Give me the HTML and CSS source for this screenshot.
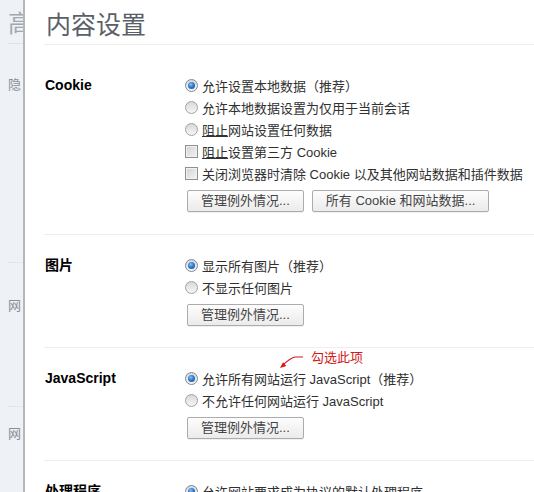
FILE: index.html
```html
<!DOCTYPE html>
<html lang="zh-CN">
<head>
<meta charset="utf-8">
<title>内容设置</title>
<link rel="stylesheet" href="styles.css">
</head>
<body>
<div class="page">
  <div class="strip">
    <div class="bg-title">高</div>
    <div class="bg-item bg-1">隐</div>
    <div class="bg-line bg-l1"></div>
    <div class="bg-item bg-2">网</div>
    <div class="bg-line bg-l2"></div>
    <div class="bg-item bg-3">网</div>
  </div>
  <div class="dialog">
    <div class="header"><h1 class="title">内容设置</h1></div>

    <section class="section first">
      <div class="label">Cookie</div>
      <div class="options">
        <div class="row"><span class="radio checked"></span><span>允许设置本地数据（推荐）</span></div>
        <div class="row"><span class="radio"></span><span>允许本地数据设置为仅用于当前会话</span></div>
        <div class="row"><span class="radio"></span><span><span class="ul">阻止</span>网站设置任何数据</span></div>
        <div class="row"><span class="check"></span><span><span class="ul">阻止</span>设置第三方 Cookie</span></div>
        <div class="row"><span class="check"></span><span>关闭浏览器时清除 Cookie 以及其他网站数据和插件数据</span></div>
        <div class="buttons">
          <button class="btn">管理例外情况...</button>
          <button class="btn">所有 Cookie 和网站数据...</button>
        </div>
      </div>
    </section>

    <section class="section">
      <div class="label">图片</div>
      <div class="options">
        <div class="row"><span class="radio checked"></span><span>显示所有图片（推荐）</span></div>
        <div class="row"><span class="radio"></span><span>不显示任何图片</span></div>
        <div class="buttons"><button class="btn">管理例外情况...</button></div>
      </div>
    </section>

    <section class="section">
      <div class="label">JavaScript</div>
      <div class="options">
        <div class="row"><span class="radio checked"></span><span>允许所有网站运行 JavaScript（推荐）</span></div>
        <div class="row"><span class="radio"></span><span>不允许任何网站运行 JavaScript</span></div>
        <div class="buttons"><button class="btn">管理例外情况...</button></div>
      </div>
    </section>

    <section class="section">
      <div class="label">处理程序</div>
      <div class="options">
        <div class="row"><span class="radio checked"></span><span>允许网站要求成为协议的默认处理程序</span></div>
      </div>
    </section>
  </div>

  <svg class="arrow" width="32" height="24" viewBox="0 0 32 24">
    <path d="M27 7 L19 7 Q14 8 6 16" fill="none" stroke="#d41818" stroke-width="1.2"/>
    <polygon points="4,18 10.3,16.1 7.1,12.3" fill="#d41818"/>
  </svg>
  <div class="note">勾选此项</div>
</div>
</body>
</html>
```

FILE: styles.css
```css
html, body {
  margin: 0;
  padding: 0;
  background: #fff;
}

body {
  font-family: "Liberation Sans", "Noto Sans CJK SC", sans-serif;
  font-size: 13px;
  color: #303030;
}

.page {
  position: relative;
  display: flex;
  width: 534px;
  height: 492px;
  overflow: hidden;
}

/* background settings page peeking on the left */
.strip {
  flex: none;
  width: 23px;
  background: #eef1f5;
  overflow: hidden;
  padding-left: 8px;
  box-sizing: border-box;
  color: #9a9ea3;
  white-space: nowrap;
}

.bg-title {
  margin-top: 9px;
  font-size: 24px;
  line-height: 30px;
  padding-bottom: 4px;
  border-bottom: 1px solid #dfe3e8;
  color: #a3a8ae;
}

.bg-item {
  font-size: 13px;
  line-height: 20px;
  color: #8a8e93;
}

.bg-1 { margin-top: 31px; }

.bg-line {
  height: 1px;
  background: #e2e6eb;
}

.bg-l1 { margin-top: 167px; }
.bg-2 { margin-top: 33px; }
.bg-l2 { margin-top: 90px; }
.bg-3 { margin-top: 17px; }

/* overlay dialog */
.dialog {
  flex: 1;
  background: #fff;
  border-left: 2px solid #b4b6b8;
  padding-left: 19px;
  min-width: 0;
}

.header {
  padding-top: 8px;
  padding-bottom: 6px;
  border-bottom: 1px solid #eeeeee;
}

.title {
  margin: 0;
  padding-left: 2px;
  font-size: 25px;
  line-height: 30px;
  font-weight: normal;
  color: #5a6068;
  font-family: "Noto Sans CJK SC", "Liberation Sans", sans-serif;
}

.section {
  display: grid;
  grid-template-columns: 141px 1fr;
  padding: 19px 0 21px;
  border-bottom: 1px solid #eeeeee;
}

.section.first {
  padding-top: 29px;
  padding-bottom: 22px;
}

.label {
  padding-left: 1px;
  font-size: 14px;
  font-weight: bold;
  line-height: 22px;
  color: #000;
}

.options {
  display: flex;
  flex-direction: column;
}

.row {
  display: flex;
  align-items: center;
  height: 22px;
  white-space: nowrap;
}

.radio {
  flex: none;
  position: relative;
  width: 11px;
  height: 11px;
  margin-right: 4px;
  border: 1px solid #a2a2a2;
  border-radius: 50%;
  background: linear-gradient(#d8d8d8, #f6f6f6);
}

.radio.checked {
  border-color: #7c8a9c;
}

.radio.checked::after {
  content: "";
  position: absolute;
  left: 2px;
  top: 2px;
  width: 7px;
  height: 7px;
  border-radius: 50%;
  background: radial-gradient(circle at 40% 35%, #8fc2f4 0%, #2f7ad0 45%, #19468e 100%);
}

.check {
  flex: none;
  width: 11px;
  height: 11px;
  margin-right: 4px;
  border: 1px solid #8e8f8f;
  background: linear-gradient(135deg, #d2d2d2, #f4f4f4);
  box-shadow: inset 0 0 0 1px #f2f2f2;
}

.ul {
  text-decoration: underline;
  text-decoration-color: #333;
}

.buttons {
  display: flex;
  gap: 8px;
  margin-top: 6px;
  margin-left: 2px;
}

.btn {
  height: 22px;
  padding: 0 13px;
  font-family: "Liberation Sans", "Noto Sans CJK SC", sans-serif;
  font-size: 13px;
  line-height: 20px;
  color: #444;
  border: 1px solid #acacac;
  border-radius: 2px;
  background: linear-gradient(#fdfdfd, #ebebeb);
  box-shadow: 0 1px 0 rgba(0, 0, 0, 0.06);
  white-space: nowrap;
}

/* red annotation over the content */
.arrow {
  position: absolute;
  left: 276px;
  top: 350px;
}

.note {
  position: absolute;
  left: 311px;
  top: 348px;
  font-size: 13px;
  line-height: 20px;
  color: #d41818;
}
```
